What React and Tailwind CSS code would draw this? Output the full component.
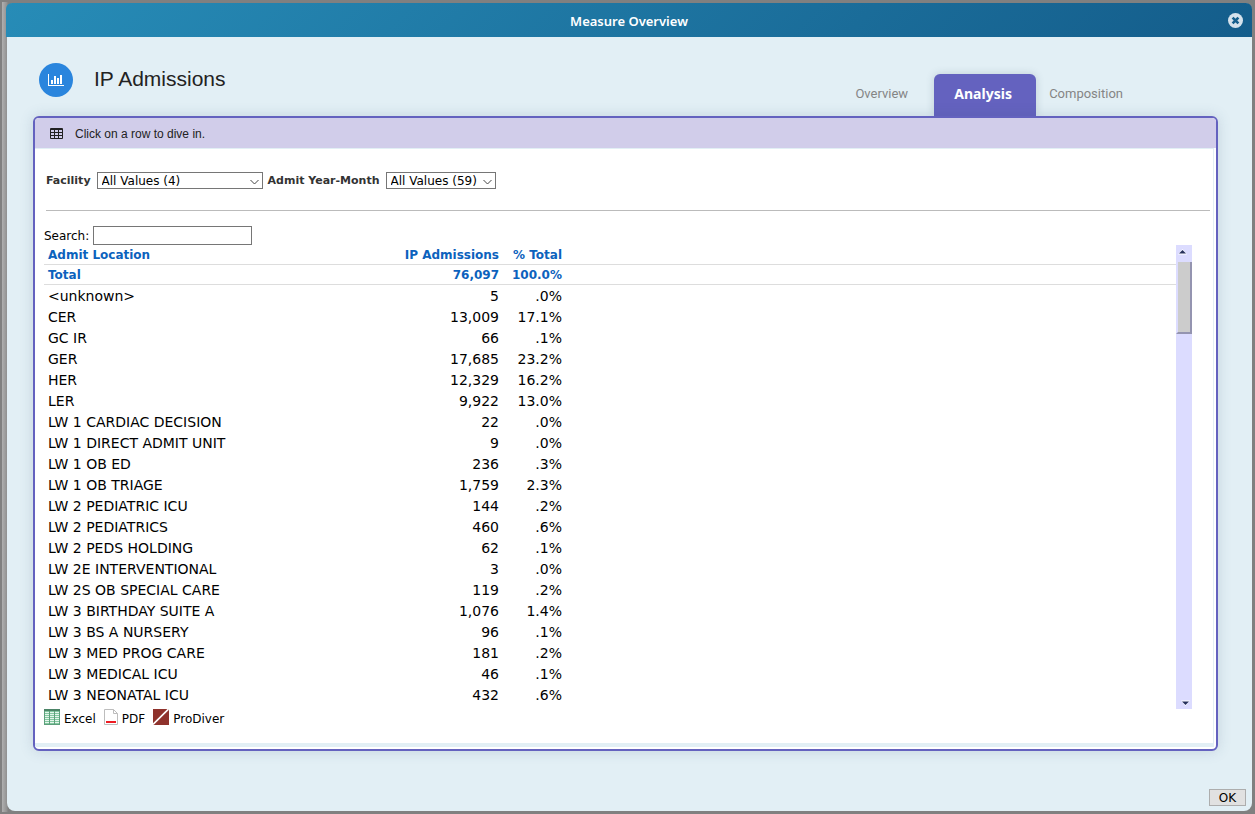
import React, { useState } from "react";

const columns = ["Admit Location", "IP Admissions", "% Total"];

const rows = [
  ["<unknown>", "5", ".0%"],
  ["CER", "13,009", "17.1%"],
  ["GC IR", "66", ".1%"],
  ["GER", "17,685", "23.2%"],
  ["HER", "12,329", "16.2%"],
  ["LER", "9,922", "13.0%"],
  ["LW 1 CARDIAC DECISION", "22", ".0%"],
  ["LW 1 DIRECT ADMIT UNIT", "9", ".0%"],
  ["LW 1 OB ED", "236", ".3%"],
  ["LW 1 OB TRIAGE", "1,759", "2.3%"],
  ["LW 2 PEDIATRIC ICU", "144", ".2%"],
  ["LW 2 PEDIATRICS", "460", ".6%"],
  ["LW 2 PEDS HOLDING", "62", ".1%"],
  ["LW 2E INTERVENTIONAL", "3", ".0%"],
  ["LW 2S OB SPECIAL CARE", "119", ".2%"],
  ["LW 3 BIRTHDAY SUITE A", "1,076", "1.4%"],
  ["LW 3 BS A NURSERY", "96", ".1%"],
  ["LW 3 MED PROG CARE", "181", ".2%"],
  ["LW 3 MEDICAL ICU", "46", ".1%"],
  ["LW 3 NEONATAL ICU", "432", ".6%"],
];

function ChartIcon() {
  return (
    <svg width="16" height="12" viewBox="0 0 16 12" fill="#fff" shapeRendering="crispEdges">
      <path d="M0 0h1v11h15v1H0z" />
      <path d="M3 6h2v4H3zM6 2h2v8H6zM9 4h2v6H9zM12 1h2v9h-2z" />
    </svg>
  );
}

function GridIcon() {
  return (
    <svg width="13" height="11" viewBox="0 0 13 11">
      <rect width="13" height="11" rx="1" fill="#222" />
      <path
        d="M1 2h3v2H1zM5 2h3v2H5zM9 2h3v2H9zM1 5h3v2H1zM5 5h3v2H5zM9 5h3v2H9zM1 8h3v2H1zM5 8h3v2H5zM9 8h3v2H9z"
        fill="#d1cdea"
      />
    </svg>
  );
}

function CloseIcon() {
  return (
    <svg width="15" height="15" viewBox="0 0 15 15">
      <circle cx="7.5" cy="7.5" r="7.5" fill="#d5e2ec" />
      <path d="M4.6 4.6l5.8 5.8M10.4 4.6l-5.8 5.8" stroke="#165f8d" strokeWidth="2.6" />
    </svg>
  );
}

function ExcelIcon() {
  return (
    <svg width="16" height="16" viewBox="0 0 16 16" shapeRendering="crispEdges">
      <rect width="16" height="16" fill="#5d9f7c" />
      <path d="M0 0h16v2H0z" fill="#4c8467" />
      <path
        d="M1 3h4v1H1zM6 3h4v1H6zM11 3h4v1h-4zM1 5h4v1H1zM6 5h4v1H6zM11 5h4v1h-4zM1 7h4v1H1zM6 7h4v1H6zM11 7h4v1h-4zM1 9h4v1H1zM6 9h4v1H6zM11 9h4v1h-4zM1 11h4v1H1zM6 11h4v1H6zM11 11h4v1h-4zM1 13h4v1H1zM6 13h4v1H6zM11 13h4v1h-4z"
        fill="#e6f5ec"
      />
      <path
        d="M1 2h4v1H1zM6 2h4v1H6zM11 2h4v1h-4zM1 4h4v1H1zM6 4h4v1H6zM11 4h4v1h-4zM1 6h4v1H1zM6 6h4v1H6zM11 6h4v1h-4zM1 8h4v1H1zM6 8h4v1H6zM11 8h4v1h-4zM1 10h4v1H1zM6 10h4v1H6zM11 10h4v1h-4zM1 12h4v1H1zM6 12h4v1H6zM11 12h4v1h-4zM1 14h4v1H1zM6 14h4v1H6zM11 14h4v1h-4z"
        fill="#83c9a0"
      />
    </svg>
  );
}

function PdfIcon() {
  return (
    <svg width="14" height="16" viewBox="0 0 14 16">
      <path d="M.5.5h9l4 4v11H.5z" fill="#fff" stroke="#bdbdbd" />
      <path d="M9.5.5v4h4" fill="none" stroke="#bdbdbd" />
      <path d="M2 12h10v2H2z" fill="#ee1c23" />
    </svg>
  );
}

function ProDiverIcon() {
  return (
    <svg width="16" height="16" viewBox="0 0 16 16">
      <rect width="16" height="16" fill="#8f322c" />
      <path d="M0 15.5L15.5 0" stroke="#fff" strokeWidth="1.6" />
    </svg>
  );
}

function FilterSelect({ id, label, value, className }) {
  return (
    <div className="flex items-center gap-1.5">
      <label htmlFor={id} className="pt-0.5 text-[11px] font-bold text-[#333]">
        {label}
      </label>
      <div className={`relative ${className}`}>
        <select
          id={id}
          className="block h-[17px] w-full appearance-none border border-[#767676] bg-white pl-1 pt-px leading-[14px] text-black"
        >
          <option>{value}</option>
        </select>
        <svg
          className="pointer-events-none absolute right-1 top-[7px]"
          width="9"
          height="6"
          viewBox="0 0 9 6"
          fill="none"
          stroke="#444"
        >
          <path d="M.5 1l4 4 4-4" />
        </svg>
      </div>
    </div>
  );
}

const exportLinks = [
  { name: "Excel", icon: <ExcelIcon /> },
  { name: "PDF", icon: <PdfIcon /> },
  { name: "ProDiver", icon: <ProDiverIcon /> },
];

export default function App() {
  const [tab, setTab] = useState("Analysis");
  const [search, setSearch] = useState("");

  const visibleRows = rows.filter((row) =>
    row[0].toLowerCase().includes(search.toLowerCase())
  );

  const tabClass = (name) =>
    name === tab
      ? "h-[42px] w-[102px] rounded-t-md bg-[#6462bf] pb-0.5 pr-1 font-['Noto_Sans',sans-serif] text-sm font-bold text-white shadow-[0_0_8px_rgba(60,80,100,0.2)]"
      : "h-[42px] pb-0.5 font-[Roboto,sans-serif] text-[13px] text-[#858585]";

  return (
    <div className="flex min-h-screen flex-col border-2 border-[#808080] bg-[linear-gradient(to_right,#b0b0b0,#909090_5px,#808080_6px)] pb-px pl-[5px] pr-px pt-px font-['DejaVu_Sans',sans-serif] text-xs">
      <div className="flex flex-1 flex-col rounded-lg bg-[#e2eff5]">
        <header className="-ml-px flex h-[34px] items-center rounded-t-md bg-linear-[135deg] from-[#278cb7] to-[#145d8b] pl-6 pr-[9px]">
          <h1 className="flex-1 pt-1 text-center font-['Noto_Sans',sans-serif] text-[13px] font-semibold text-white">
            Measure Overview
          </h1>
          <button type="button" aria-label="Close">
            <CloseIcon />
          </button>
        </header>

        <main className="flex flex-1 flex-col pl-[26px] pr-[34px]">
          <div className="flex h-[79px] items-end justify-between pl-1.5 pr-[95px]">
            <div className="flex items-center gap-[21px] pb-[19px]">
              <span className="flex size-[34px] items-center justify-center rounded-full bg-[#2a85dd]">
                <ChartIcon />
              </span>
              <h2 className="pb-0.5 font-['Liberation_Sans',sans-serif] text-[21px] text-[#222]">
                IP Admissions
              </h2>
            </div>
            <nav className="flex">
              <button type="button" className={`mr-[26px] ${tabClass("Overview")}`} onClick={() => setTab("Overview")}>
                Overview
              </button>
              <button type="button" className={tabClass("Analysis")} onClick={() => setTab("Analysis")}>
                Analysis
              </button>
              <button type="button" className={`ml-[13px] ${tabClass("Composition")}`} onClick={() => setTab("Composition")}>
                Composition
              </button>
            </nav>
          </div>

          <section className="rounded-md border-2 border-[#6462bf] bg-white pb-0.5 shadow-[0_0_14px_rgba(60,90,120,0.18)]">
            <div className="flex h-[30px] items-center gap-3 rounded-t-sm bg-[#d1cdea] pl-[15px] pt-px font-['Liberation_Sans',sans-serif] text-xs text-[#222]">
              <GridIcon />
              Click on a row to dive in.
            </div>

            <div className="mr-0.5 border-b-4 border-r border-t border-[#e2eff5] pb-4 pl-[9px]">
              <div className="mr-[3px] ml-0.5 flex h-[62px] items-center gap-[5px] border-b border-[#bbb] pt-0.5">
                <FilterSelect id="facility" label="Facility" value="All Values (4)" className="w-[166px]" />
                <FilterSelect id="month" label="Admit Year-Month" value="All Values (59)" className="w-[110px]" />
              </div>

              <div className="flex items-center gap-1 pt-[15px]">
                <label htmlFor="search">Search:</label>
                <input
                  id="search"
                  value={search}
                  onChange={(e) => setSearch(e.target.value)}
                  className="h-[19px] w-[159px] border border-[#767676] bg-white px-1"
                />
              </div>

              <div className="mr-[21px] flex h-[464px]">
                <div className="flex-1 overflow-hidden">
                  <table className="w-full table-fixed">
                    <colgroup>
                      <col className="w-[340px]" />
                      <col className="w-[119px]" />
                      <col className="w-[63px]" />
                      <col />
                    </colgroup>
                    <thead className="text-xs leading-[18px] text-[#0c62bd]">
                      <tr className="border-b border-[#ddd]">
                        {columns.map((name, i) => (
                          <th key={name} className={`whitespace-nowrap px-1 pt-px ${i ? "text-right" : "text-left"}`}>
                            {name}
                          </th>
                        ))}
                        <th />
                      </tr>
                      <tr className="border-b border-[#ddd]">
                        <th className="px-1 pt-px text-left">Total</th>
                        <th className="px-1 pt-px text-right">76,097</th>
                        <th className="px-1 pt-px text-right">100.0%</th>
                        <th />
                      </tr>
                    </thead>
                    <tbody className="text-sm leading-5 text-black">
                      {visibleRows.map((row) => (
                        <tr key={row[0]} className="cursor-pointer">
                          <td className="whitespace-nowrap px-1 pt-px">{row[0]}</td>
                          <td className="px-1 pt-px text-right">{row[1]}</td>
                          <td className="px-1 pt-px text-right">{row[2]}</td>
                          <td />
                        </tr>
                      ))}
                    </tbody>
                  </table>
                </div>

                <div className="flex w-4 flex-col bg-[#dcdcff]">
                  <button type="button" aria-label="Scroll up" className="flex h-[17px] items-center pl-0.5 pb-1">
                    <svg width="9" height="6" viewBox="0 0 9 6">
                      <path d="M0 5.5L4.5 0 9 5.5z" fill="#fff" />
                      <path d="M1 4.5L4.5 1 8 4.5z" fill="#26305c" />
                    </svg>
                  </button>
                  <div className="h-[72px] border-b-2 border-l-2 border-r-2 border-b-[#9494b0] border-l-[#dcdcff] border-r-[#9494b0] bg-[#ccc]" />
                  <button type="button" aria-label="Scroll down" className="mt-auto flex h-3 items-center justify-center pl-0.5">
                    <svg width="9" height="6" viewBox="0 0 9 6">
                      <path d="M0 .5h9L4.5 6z" fill="#fff" />
                      <path d="M1 1.5h7L4.5 5z" fill="#26305c" />
                    </svg>
                  </button>
                </div>
              </div>

              <div className="flex gap-2">
                {exportLinks.map((link) => (
                  <a key={link.name} href="#" className="flex h-[18px] items-end gap-1 text-black">
                    <span className="mb-0.5">{link.icon}</span>
                    {link.name}
                  </a>
                ))}
              </div>
            </div>
          </section>
        </main>

        <footer className="flex justify-end pb-[5px] pr-1.5">
          <button type="button" className="h-[17px] w-[37px] border border-[#adadad] bg-[#e1e1e1] pt-px leading-[14px] text-black">
            OK
          </button>
        </footer>
      </div>
    </div>
  );
}
